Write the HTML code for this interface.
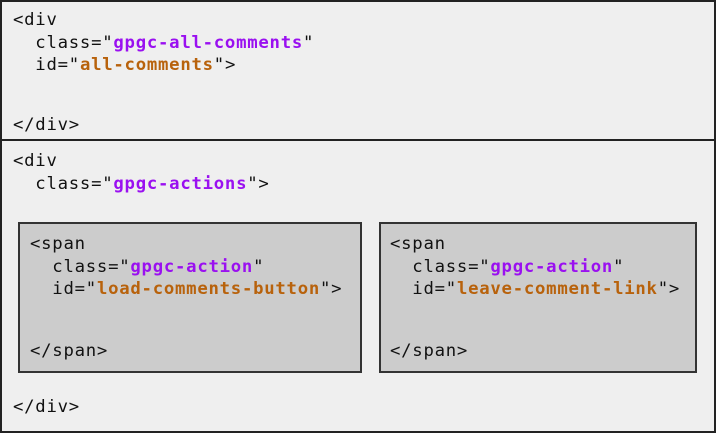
<!DOCTYPE html>
<html><head><style>
body{margin:0;width:716px;height:433px;background:#fff;font-family:"DejaVu Sans Mono","Liberation Mono",monospace;font-size:17.3px;letter-spacing:0.75px;color:#111;position:relative;overflow:hidden}
.b{position:absolute;box-sizing:border-box;border:2px solid #222;background:#efefef;letter-spacing:0}
.s{background:#cccccc;border:2px solid #333}
.t{position:absolute;white-space:pre;line-height:22.5px}
.c{color:#9a10f0;font-weight:bold}
.i{color:#b8620c;font-weight:bold}
</style></head><body>
<div class="b" style="left:0;top:0;width:716px;height:142px"></div>
<div class="b" style="left:0;top:139px;width:716px;height:294px"></div>
<div class="b s" style="left:18px;top:222px;width:344px;height:151px"></div>
<div class="b s" style="left:379px;top:222px;width:318px;height:151px"></div>
<div class="t" style="left:13px;top:9px">&lt;div
  class="<span class="c">gpgc-all-comments</span>"
  id="<span class="i">all-comments</span>"&gt;</div>
<div class="t" style="left:13px;top:114px">&lt;/div&gt;</div>
<div class="t" style="left:13px;top:150px">&lt;div
  class="<span class="c">gpgc-actions</span>"&gt;</div>
<div class="t" style="left:13px;top:396px">&lt;/div&gt;</div>
<div class="t" style="left:30px;top:233px">&lt;span
  class="<span class="c">gpgc-action</span>"
  id="<span class="i">load-comments-button</span>"&gt;</div>
<div class="t" style="left:30px;top:340px">&lt;/span&gt;</div>
<div class="t" style="left:390px;top:233px">&lt;span
  class="<span class="c">gpgc-action</span>"
  id="<span class="i">leave-comment-link</span>"&gt;</div>
<div class="t" style="left:390px;top:340px">&lt;/span&gt;</div>
</body></html>
